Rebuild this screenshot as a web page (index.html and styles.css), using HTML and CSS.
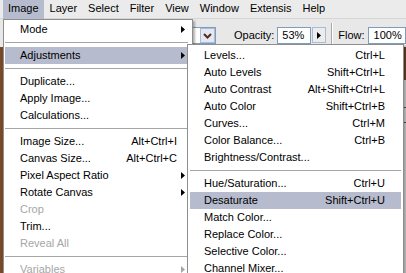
FILE: index.html
```html
<!DOCTYPE html>
<html lang="en">
<head>
    <meta charset="UTF-8">
    <title>Image menu - Adjustments</title>
    <link rel="stylesheet" href="styles.css">
</head>
<body>

    <div class="app">
        <div class="menubar">
            <span class="menubar-item is-open">Image</span>
            <span class="menubar-item">Layer</span>
            <span class="menubar-item">Select</span>
            <span class="menubar-item">Filter</span>
            <span class="menubar-item">View</span>
            <span class="menubar-item">Window</span>
            <span class="menubar-item">Extensis</span>
            <span class="menubar-item">Help</span>
        </div>

        <div class="options">
            <div class="options-left">
                <span class="opt-label">Mode:</span>
                <div class="select">
                    <span class="select-value">Normal</span>
                    <span class="select-btn">
                        <svg width="9" height="6" viewBox="0 0 9 6"><polyline points="1,1 4.5,4.5 8,1" fill="none" stroke="#5a2c1c" stroke-width="2"/></svg>
                    </span>
                </div>
            </div>
            <span class="opt-label opacity-label">Opacity:</span>
            <div class="field">53%</div>
            <span class="step-btn">
                <svg width="4" height="7" viewBox="0 0 4 7"><polygon points="0,0 4,3.5 0,7" fill="#000"/></svg>
            </span>
            <span class="opt-sep"></span>
            <span class="opt-label flow-label">Flow:</span>
            <div class="field field-wide">100%</div>
        </div>

        <div class="workspace">
            <div class="doc"></div>
            <div class="palette">
                <div class="palette-head"></div>
                <div class="palette-row"></div>
            </div>
        </div>

        <!-- Image menu -->
        <div class="menu menu-main">
            <div class="item"><span>Mode</span><span class="key"></span><span class="arrow"><svg width="4" height="7" viewBox="0 0 4 7"><polygon points="0,0 4,3.5 0,7"/></svg></span></div>
            <div class="sep"></div>
            <div class="item is-active"><span>Adjustments</span><span class="key"></span><span class="arrow"><svg width="4" height="7" viewBox="0 0 4 7"><polygon points="0,0 4,3.5 0,7"/></svg></span></div>
            <div class="sep"></div>
            <div class="item"><span>Duplicate...</span><span class="key"></span><span class="arrow"></span></div>
            <div class="item"><span>Apply Image...</span><span class="key"></span><span class="arrow"></span></div>
            <div class="item"><span>Calculations...</span><span class="key"></span><span class="arrow"></span></div>
            <div class="sep"></div>
            <div class="item"><span>Image Size...</span><span class="key">Alt+Ctrl+I</span><span class="arrow"></span></div>
            <div class="item"><span>Canvas Size...</span><span class="key">Alt+Ctrl+C</span><span class="arrow"></span></div>
            <div class="item"><span>Pixel Aspect Ratio</span><span class="key"></span><span class="arrow"><svg width="4" height="7" viewBox="0 0 4 7"><polygon points="0,0 4,3.5 0,7"/></svg></span></div>
            <div class="item"><span>Rotate Canvas</span><span class="key"></span><span class="arrow"><svg width="4" height="7" viewBox="0 0 4 7"><polygon points="0,0 4,3.5 0,7"/></svg></span></div>
            <div class="item is-disabled"><span>Crop</span><span class="key"></span><span class="arrow"></span></div>
            <div class="item"><span>Trim...</span><span class="key"></span><span class="arrow"></span></div>
            <div class="item is-disabled"><span>Reveal All</span><span class="key"></span><span class="arrow"></span></div>
            <div class="sep"></div>
            <div class="item is-disabled"><span>Variables</span><span class="key"></span><span class="arrow"><svg width="4" height="7" viewBox="0 0 4 7"><polygon points="0,0 4,3.5 0,7"/></svg></span></div>
        </div>

        <!-- Adjustments submenu -->
        <div class="menu menu-sub">
            <div class="item"><span>Levels...</span><span class="key">Ctrl+L</span><span class="arrow"></span></div>
            <div class="item"><span>Auto Levels</span><span class="key">Shift+Ctrl+L</span><span class="arrow"></span></div>
            <div class="item"><span>Auto Contrast</span><span class="key">Alt+Shift+Ctrl+L</span><span class="arrow"></span></div>
            <div class="item"><span>Auto Color</span><span class="key">Shift+Ctrl+B</span><span class="arrow"></span></div>
            <div class="item"><span>Curves...</span><span class="key">Ctrl+M</span><span class="arrow"></span></div>
            <div class="item"><span>Color Balance...</span><span class="key">Ctrl+B</span><span class="arrow"></span></div>
            <div class="item"><span>Brightness/Contrast...</span><span class="key"></span><span class="arrow"></span></div>
            <div class="sep"></div>
            <div class="item"><span>Hue/Saturation...</span><span class="key">Ctrl+U</span><span class="arrow"></span></div>
            <div class="item is-active"><span>Desaturate</span><span class="key">Shift+Ctrl+U</span><span class="arrow"></span></div>
            <div class="item"><span>Match Color...</span><span class="key"></span><span class="arrow"></span></div>
            <div class="item"><span>Replace Color...</span><span class="key"></span><span class="arrow"></span></div>
            <div class="item"><span>Selective Color...</span><span class="key"></span><span class="arrow"></span></div>
            <div class="item"><span>Channel Mixer...</span><span class="key"></span><span class="arrow"></span></div>
        </div>
    </div>

</body>
</html>
```

FILE: styles.css
```css
body {
    margin: 0;
    font-family: 'Liberation Sans', Arial, sans-serif;
    font-size: 11px;
    color: #000;
}

.app {
    position: relative;
    width: 406px;
    height: 273px;
    overflow: hidden;
    background-color: #ebebeb;
    display: flex;
    flex-direction: column;
}

/* menu bar */
.menubar {
    display: flex;
    height: 18px;
    padding-left: 3px;
    background-color: #ebebeb;
    border-bottom: 1px solid #d6d6d6;
}

.menubar-item {
    height: 19px;
    line-height: 16px;
    padding: 0 5px;
    margin-right: 1px;
}

.menubar-item.is-open {
    background-color: #b6bcce;
}

/* options bar */
.options {
    display: flex;
    align-items: flex-start;
    height: 28px;
    padding-top: 8px;
    box-sizing: border-box;
    background-color: #e8e8e8;
}

.options-left {
    flex: 0 0 216px;
    display: flex;
    justify-content: flex-end;
    gap: 4px;
}

.opt-label {
    line-height: 17px;
    white-space: nowrap;
}

.opacity-label {
    margin-left: 18px;
}

.flow-label {
    margin-left: 5px;
}

.select {
    display: flex;
    width: 90px;
    height: 17px;
    box-sizing: border-box;
    border: 1px solid #7f9db9;
    background-color: #fff;
}

.select-value {
    flex: 1;
    padding-left: 4px;
    line-height: 15px;
}

.select-btn {
    display: flex;
    align-items: center;
    justify-content: center;
    width: 15px;
    box-sizing: border-box;
    border: 1px solid #a9bbd6;
    background-color: #e3e8f2;
}

.field {
    width: 35px;
    height: 17px;
    margin-left: 3px;
    box-sizing: border-box;
    border: 1px solid #7f9db9;
    background-color: #fff;
    padding-left: 4px;
    line-height: 15px;
}

.field-wide {
    width: 40px;
    padding-left: 5px;
}

.step-btn {
    display: flex;
    align-items: center;
    justify-content: center;
    width: 15px;
    height: 16px;
    margin-left: 1px;
    box-sizing: border-box;
    border: 1px solid #a9bbd6;
    background-color: #ececec;
}

.opt-sep {
    width: 1px;
    height: 24px;
    margin-top: -4px;
    margin-left: 5px;
    background-color: #a8a8a8;
    border-right: 1px solid #fff;
}

/* workspace behind the menus */
.workspace {
    flex: 1;
    display: flex;
    background-color: #6e4526;
}

.doc {
    flex: 1;
    background: repeating-linear-gradient(90deg, #6a3f22 0, #8a5630 1px, #5b361d 2px);
}

.palette {
    width: 40px;
    margin-top: 33px;
    background-color: #dedede;
    border-left: 1px solid #808080;
}

.palette-head {
    height: 27px;
    border-bottom: 1px solid #555;
}

.palette-row {
    height: 14px;
    border-bottom: 1px solid #555;
}

/* menus */
.menu {
    position: absolute;
    box-sizing: border-box;
    background-color: #fff;
    border: 1px solid #8e8e8e;
    box-shadow: 2px 2px 2px rgba(0, 0, 0, 0.3);
}

.menu-main {
    left: 3px;
    top: 19px;
    width: 190px;
    padding: 1px 4px 0 1px;
}

.menu-sub {
    left: 187px;
    top: 44px;
    width: 217px;
    padding: 2px 2px 0 2px;
}

.item {
    display: grid;
    grid-template-columns: 1fr auto 11px;
    align-items: center;
    height: 17px;
    line-height: 17px;
    padding-left: 15px;
    white-space: nowrap;
}

.menu-sub .item {
    grid-template-columns: 1fr auto 16px;
    padding-left: 14px;
}

.item.is-active {
    background-color: #b6bcce;
}

.item.is-disabled {
    color: #a6a6a6;
}

.arrow {
    display: flex;
    padding-left: 4px;
}

.arrow svg {
    fill: #000;
}

.is-disabled .arrow svg {
    fill: #a6a6a6;
}

.sep {
    height: 9px;
    box-sizing: border-box;
    padding-top: 4px;
}

.sep::after {
    content: '';
    display: block;
    height: 1px;
    background-color: #a5a5a5;
}
```
